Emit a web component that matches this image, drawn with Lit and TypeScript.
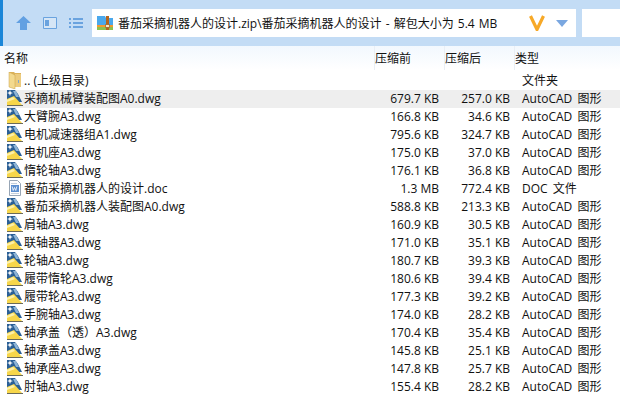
import { LitElement, html, css, svg } from 'lit';
import { customElement } from 'lit/decorators.js';

type Row = [string, string, string, string, 'dwg' | 'doc' | 'up'];

const ROWS: Row[] = [
  ['.. (上级目录)', '', '', '文件夹', 'up'],
  ['采摘机械臂装配图A0.dwg', '679.7 KB', '257.0 KB', 'AutoCAD 图形', 'dwg'],
  ['大臂腕A3.dwg', '166.8 KB', '34.6 KB', 'AutoCAD 图形', 'dwg'],
  ['电机减速器组A1.dwg', '795.6 KB', '324.7 KB', 'AutoCAD 图形', 'dwg'],
  ['电机座A3.dwg', '175.0 KB', '37.0 KB', 'AutoCAD 图形', 'dwg'],
  ['惰轮轴A3.dwg', '176.1 KB', '36.8 KB', 'AutoCAD 图形', 'dwg'],
  ['番茄采摘机器人的设计.doc', '1.3 MB', '772.4 KB', 'DOC 文件', 'doc'],
  ['番茄采摘机器人装配图A0.dwg', '588.8 KB', '213.3 KB', 'AutoCAD 图形', 'dwg'],
  ['肩轴A3.dwg', '160.9 KB', '30.5 KB', 'AutoCAD 图形', 'dwg'],
  ['联轴器A3.dwg', '171.0 KB', '35.1 KB', 'AutoCAD 图形', 'dwg'],
  ['轮轴A3.dwg', '180.7 KB', '39.3 KB', 'AutoCAD 图形', 'dwg'],
  ['履带惰轮A3.dwg', '180.6 KB', '39.4 KB', 'AutoCAD 图形', 'dwg'],
  ['履带轮A3.dwg', '177.3 KB', '39.2 KB', 'AutoCAD 图形', 'dwg'],
  ['手腕轴A3.dwg', '174.0 KB', '28.2 KB', 'AutoCAD 图形', 'dwg'],
  ['轴承盖（透）A3.dwg', '170.4 KB', '35.4 KB', 'AutoCAD 图形', 'dwg'],
  ['轴承盖A3.dwg', '145.8 KB', '25.1 KB', 'AutoCAD 图形', 'dwg'],
  ['轴承座A3.dwg', '147.8 KB', '25.7 KB', 'AutoCAD 图形', 'dwg'],
  ['肘轴A3.dwg', '155.4 KB', '28.2 KB', 'AutoCAD 图形', 'dwg'],
];

const dwgIcon = svg`<svg width="16" height="16" viewBox="0 0 16 16">
  <path d="M0 0h8l3 4 4 8H0z" fill="#2a5f96"/>
  <path d="M6 1h3l3 6H9z" fill="#8db4d6"/>
  <path d="M3 0l.8 2.200L6 3l-2.200.8L3 6l-.8-2.200L0 3l2.200-.8z" fill="#fff"/>
  <path d="M0 15V9l7-3 8 9z" fill="#f7d64a"/>
  <path d="M0 10l6-3 2 2-8 3z" fill="#fdf0a8"/>
  <path d="M0 15h16v1H0z" fill="#6b6a58"/>
</svg>`;

const docIcon = svg`<svg width="14" height="16" viewBox="0 0 14 16">
  <path d="M1.500.5h8l3 3v12h-11z" fill="#fdfdfe" stroke="#97a5b5"/>
  <path d="M3 3h6v1H3zM3 13h8v1H3z" fill="#c4cfdc"/>
  <path d="M3 5h8v7H3z" fill="#5c8fd0"/>
  <path d="M4.200 6.500l1 4 1.300-3 1.300 3 1-4" fill="none" stroke="#fff" stroke-width=".8"/>
</svg>`;

const upIcon = svg`<svg width="14" height="17" viewBox="0 0 14 17">
  <path d="M1 0h5l1 1h6v14H1z" fill="#dcb25a"/>
  <path d="M7 2h6v13H7z" fill="#eccb7e"/>
  <path d="M1 0l6 3v14l-6-2z" fill="#f3d98e" stroke="#c9a04a" stroke-width=".5"/>
  <path d="M10 8h1v3h-1z" fill="#7ea8cf"/>
</svg>`;

const zipIcon = svg`<svg width="16" height="14" viewBox="0 0 16 14">
  <path d="M0 0h8l1 2h7v8H0z" fill="#4aa8ec"/>
  <path d="M0 9h16v2H0z" fill="#f39a2e"/>
  <path d="M0 11h16v3H0z" fill="#8cc152"/>
  <path d="M9 0h3v14H9z" fill="#b5651d"/>
  <path d="M8.500 8.500h4v3h-4z" fill="#f7e6c0" stroke="#8a4b12" stroke-width=".6"/>
</svg>`;

const icons = { dwg: dwgIcon, doc: docIcon, up: upIcon };

@customElement('app-root')
export class AppRoot extends LitElement {
  static styles = css`
    :host {
      display: block;
      width: 620px;
      height: 409px;
      overflow: hidden;
      background: #fff;
      font-family: "Open Sans", "Noto Sans CJK SC", sans-serif;
      font-size: 12px;
      color: #111;
    }

    .toolbar {
      display: flex;
      align-items: center;
      height: 46px;
      box-sizing: border-box;
      background: #c3dcf5;
      border-left: 3px solid #1a86d8;
    }

    .tools {
      display: flex;
      align-items: center;
      gap: 12px;
      width: 89px;
      padding-left: 13px;
      box-sizing: border-box;
    }

    .path {
      display: flex;
      align-items: center;
      gap: 5px;
      width: 484px;
      height: 28px;
      padding-left: 5px;
      box-sizing: border-box;
      background: #fff;
      white-space: nowrap;
    }

    .path-text {
      flex: 1;
      word-spacing: 1px;
    }

    .brand {
      display: flex;
      align-items: center;
      gap: 11px;
      padding-right: 8px;
    }

    .search {
      flex: 1;
      height: 28px;
      margin-left: 6px;
      background: #fff;
    }

    .head {
      display: flex;
      height: 24px;
      align-items: stretch;
      background: linear-gradient(#f2f8fe, #fff);
    }

    .head div {
      white-space: nowrap;
      display: flex;
      align-items: center;
      box-sizing: border-box;
      padding-bottom: 1px;
    }

    .h-name { width: 374px; padding-left: 4px; }
    .h-col { width: 70px; border-left: 1px solid #e9eff6; }

    .rows {
      display: flex;
      flex-direction: column;
      padding-top: 2px;
    }

    .row {
      display: flex;
      align-items: center;
      height: 18px;
      box-sizing: border-box;
      padding-bottom: 2px;
      white-space: nowrap;
    }

    .row.sel { background: #eeeeee; }

    .icon {
      width: 16px;
      height: 16px;
      margin-left: 7px;
      display: flex;
      align-items: center;
      justify-content: center;
    }

    .name { width: 365px; margin-left: 1px; }
    .before { width: 50px; text-align: right; }
    .after { width: 71px; text-align: right; }
    .type { margin-left: 12px; word-spacing: 2px; }
  `;

  render() {
    return html`
      <div class="toolbar">
        <div class="tools">
          <svg width="15" height="14" viewBox="0 0 15 14">
            <path d="M7.500 0L15 7h-4v7H4V7H0z" fill="#62a0e2"/>
          </svg>
          <svg width="14" height="12" viewBox="0 0 14 12">
            <path d="M.5.500h13v11H.5z" fill="#d6e6f6" stroke="#6aa3df"/>
            <path d="M2 3h4v6H2z" fill="#6aa3df"/>
          </svg>
          <svg width="14" height="12" viewBox="0 0 14 12">
            <path d="M0 1h2v2H0zM0 5h2v2H0zM0 9h2v2H0z" fill="#6aa3df"/>
            <path d="M4 1h10v2H4zM4 5h10v2H4zM4 9h10v2H4z" fill="#6aa3df"/>
          </svg>
        </div>
        <div class="path">
          ${zipIcon}
          <span class="path-text">番茄采摘机器人的设计.zip\\番茄采摘机器人的设计 - 解包大小为 5.4 MB</span>
          <span class="brand">
            <svg width="16" height="16" viewBox="0 0 16 16">
              <path d="M1.500 1l6.500 13.500L14.500 1" fill="none" stroke="#f7a928" stroke-width="3.200"/>
            </svg>
            <svg width="12" height="7" viewBox="0 0 12 7">
              <path d="M0 0h12L6 7z" fill="#7aa7e0"/>
            </svg>
          </span>
        </div>
        <div class="search"></div>
      </div>
      <div class="head">
        <div class="h-name">名称</div>
        <div class="h-col">压缩前</div>
        <div class="h-col">压缩后</div>
        <div class="h-col">类型</div>
      </div>
      <div class="rows">
        ${ROWS.map(
          ([name, before, after, type, icon], i) => html`
            <div class="row ${i === 1 ? 'sel' : ''}">
              <span class="icon">${icons[icon]}</span>
              <span class="name">${name}</span>
              <span class="before">${before}</span>
              <span class="after">${after}</span>
              <span class="type">${type}</span>
            </div>
          `
        )}
      </div>
    `;
  }
}
